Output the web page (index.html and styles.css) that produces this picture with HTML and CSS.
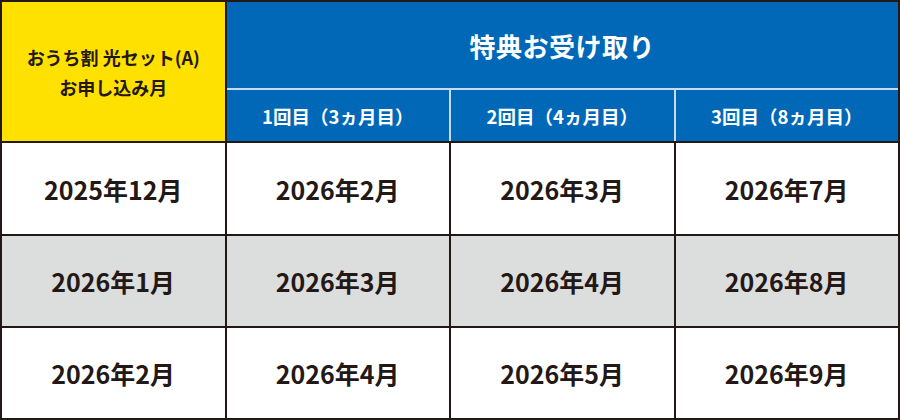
FILE: index.html
```html
<!DOCTYPE html>
<html lang="ja">
<head>
<meta charset="utf-8">
<title>特典お受け取り</title>
<link rel="stylesheet" href="styles.css">
</head>
<body>
<div class="table">
  <div class="cell apply-head">
    <span>おうち割 光セット(A)</span>
    <span>お申し込み月</span>
  </div>
  <div class="benefit-head">
    <div class="benefit-title">特典お受け取り</div>
    <div class="sub">1回目（3ヵ月目）</div>
    <div class="sub">2回目（4ヵ月目）</div>
    <div class="sub">3回目（8ヵ月目）</div>
  </div>

  <div class="cell data">2025年12月</div>
  <div class="cell data">2026年2月</div>
  <div class="cell data">2026年3月</div>
  <div class="cell data">2026年7月</div>

  <div class="cell data gray">2026年1月</div>
  <div class="cell data gray">2026年3月</div>
  <div class="cell data gray">2026年4月</div>
  <div class="cell data gray">2026年8月</div>

  <div class="cell data">2026年2月</div>
  <div class="cell data">2026年4月</div>
  <div class="cell data">2026年5月</div>
  <div class="cell data">2026年9月</div>
</div>
</body>
</html>
```

FILE: styles.css
```css
html, body {
  margin: 0;
  padding: 0;
  background: #ffffff;
}

body {
  font-family: "Noto Sans CJK JP", "Noto Sans", sans-serif;
  font-weight: 700;
  color: #231815;
}

.table {
  width: 900px;
  height: 420px;
  box-sizing: border-box;
  padding: 2px;
  background: #231815;
  display: grid;
  grid-template-columns: repeat(4, 1fr);
  grid-template-rows: 139px 91px 90px 90px;
  gap: 2px;
}

.cell {
  display: flex;
  align-items: center;
  justify-content: center;
  background: #ffffff;
}

.apply-head {
  background: #ffe100;
  flex-direction: column;
  font-size: 18px;
  line-height: 30px;
  padding-top: 1px;
}

.benefit-head {
  grid-column: 2 / 5;
  display: grid;
  grid-template-columns: repeat(3, 1fr);
  grid-template-rows: 86px 1fr;
  column-gap: 2px;
  row-gap: 2px;
  background: #c8dbee;
}

.benefit-title,
.sub {
  background: #0068b7;
  color: #ffffff;
  display: flex;
  align-items: center;
  justify-content: center;
}

.benefit-title {
  grid-column: 1 / 4;
  font-size: 26px;
  letter-spacing: 0.5px;
}

.sub {
  font-size: 18.5px;
  padding-top: 1px;
}

.data {
  font-size: 25px;
}

.gray {
  background: #dcdddd;
}
```
